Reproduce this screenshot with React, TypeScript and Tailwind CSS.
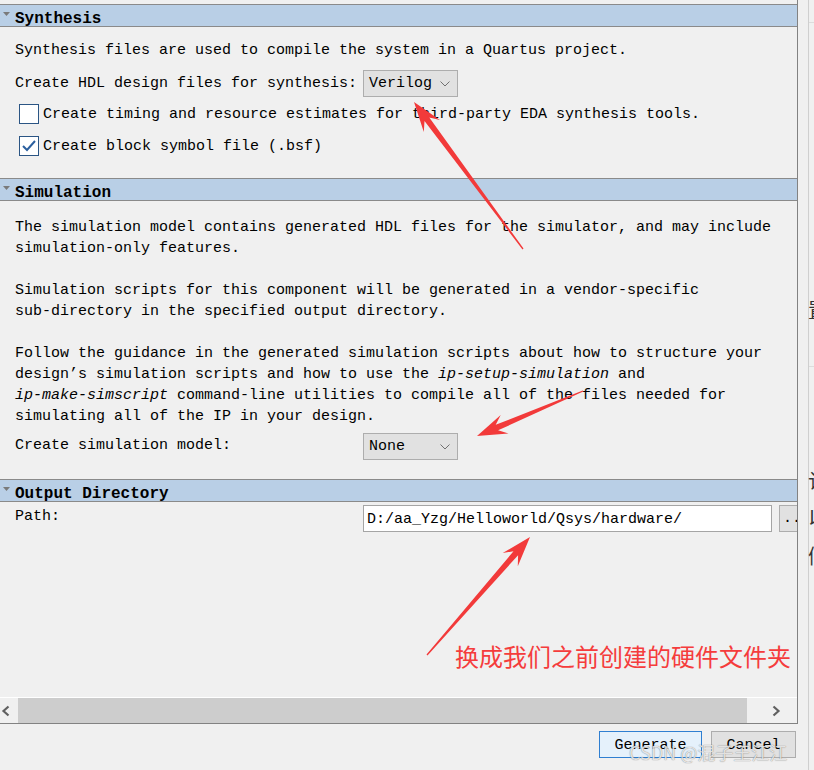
import React from "react";

function Arrow({ x1, y1, x2, y2 }: { x1: number; y1: number; x2: number; y2: number }) {
  const dx = x2 - x1;
  const dy = y2 - y1;
  const len = Math.hypot(dx, dy);
  const ux = dx / len;
  const uy = dy / len;
  const nx = -uy;
  const ny = ux;
  const L = 30;
  const hw = 10;
  const w2 = 3;
  const bx = x2 - ux * L;
  const by = y2 - uy * L;
  const kx = x2 - ux * L * 0.72;
  const ky = y2 - uy * L * 0.72;
  const pts = [
    [x1 + nx * 0.6, y1 + ny * 0.6],
    [kx + nx * w2, ky + ny * w2],
    [bx + nx * hw, by + ny * hw],
    [x2, y2],
    [bx - nx * hw, by - ny * hw],
    [kx - nx * w2, ky - ny * w2],
    [x1 - nx * 0.6, y1 - ny * 0.6],
  ]
    .map((p) => `${p[0].toFixed(1)},${p[1].toFixed(1)}`)
    .join(" ");
  return <polygon points={pts} fill="#f23a3a" />;
}

function Header({ title }: { title: string }) {
  return (
    <div className="relative h-[23px] border-y border-[#8a8a8a] bg-[#b9cfe6] flex items-center">
      <svg className="absolute left-[3px] top-[7px]" width="7" height="5" viewBox="0 0 7 5">
        <polygon points="0,0 7,0 3.5,4" fill="#7a7a7a" />
      </svg>
      <span className="pl-[15px] text-[16px] font-bold text-black leading-none pt-[6px]">{title}</span>
    </div>
  );
}

function Select({ value }: { value: string }) {
  return (
    <div className="relative w-[95px] h-[27px] bg-[#e1e1e1] border border-[#adadad] flex items-center pl-[5px] pt-[2px] text-[15px] text-black shrink-0">
      <span>{value}</span>
      <svg className="absolute right-[7px] top-[10px]" width="10" height="6" viewBox="0 0 10 6">
        <polyline points="0.5,0.5 5,5 9.5,0.5" fill="none" stroke="#707070" strokeWidth="1" />
      </svg>
    </div>
  );
}

function Checkbox({ checked }: { checked: boolean }) {
  return (
    <div className="w-[20px] h-[20px] border border-[#2b5584] bg-white flex items-center justify-center shrink-0">
      {checked && (
        <svg width="16" height="14" viewBox="0 0 16 14">
          <polyline points="2,7 6,11 14,2" fill="none" stroke="#2b5f9e" strokeWidth="2" />
        </svg>
      )}
    </div>
  );
}

export default function App() {
  return (
    <div className="relative w-[814px] h-[770px] bg-[#f0f0f0] overflow-hidden flex font-[Liberation_Mono,Courier_New,monospace] text-[15px] text-black">
      {/* main column */}
      <div className="w-[798px] shrink-0 flex flex-col">
        <div className="relative h-[724px] border-r border-b border-[#828282] flex flex-col overflow-hidden pt-[4px]">
          {/* Synthesis */}
          <Header title="Synthesis" />
          <div className="mt-[11px] h-[22px] leading-[22px] pl-[15px] pt-[2px] whitespace-pre">
            Synthesis files are used to compile the system in a Quartus project.
          </div>
          <div className="mt-[10px] h-[27px] flex items-center pl-[15px]">
            <span className="w-[348px] shrink-0 whitespace-pre leading-[22px]">Create HDL design files for synthesis:</span>
            <Select value="Verilog" />
          </div>
          <div className="mt-[7px] h-[20px] flex items-start pl-[19px] gap-[4px]">
            <Checkbox checked={false} />
            <span className="whitespace-pre leading-[20px] pt-[1px]">Create timing and resource estimates for third-party EDA synthesis tools.</span>
          </div>
          <div className="mt-[12px] h-[20px] flex items-start pl-[19px] gap-[4px]">
            <Checkbox checked={true} />
            <span className="whitespace-pre leading-[20px] pt-[1px]">Create block symbol file (.bsf)</span>
          </div>

          {/* Simulation */}
          <div className="mt-[22px]">
            <Header title="Simulation" />
          </div>
          <div className="mt-[16px] pl-[15px] leading-[21px] whitespace-pre">
            <div>The simulation model contains generated HDL files for the simulator, and may include</div>
            <div>simulation-only features.</div>
          </div>
          <div className="mt-[21px] pl-[15px] leading-[21px] whitespace-pre">
            <div>Simulation scripts for this component will be generated in a vendor-specific</div>
            <div>sub-directory in the specified output directory.</div>
          </div>
          <div className="mt-[21px] pl-[15px] leading-[21px] whitespace-pre">
            <div>Follow the guidance in the generated simulation scripts about how to structure your</div>
            <div>
              design’s simulation scripts and how to use the <i>ip-setup-simulation</i> and
            </div>
            <div>
              <i>ip-make-simscript</i> command-line utilities to compile all of the files needed for
            </div>
            <div>simulating all of the IP in your design.</div>
          </div>
          <div className="mt-[6px] h-[27px] flex items-start pl-[15px]">
            <span className="w-[348px] shrink-0 whitespace-pre leading-[22px] pt-[2px]">Create simulation model:</span>
            <Select value="None" />
          </div>

          {/* Output Directory */}
          <div className="mt-[19px]">
            <Header title="Output Directory" />
          </div>
          <div className="mt-[3px] h-[27px] flex items-start pl-[15px]">
            <span className="w-[348px] shrink-0 whitespace-pre leading-[20px] pt-[2px]">Path:</span>
            <div className="w-[409px] h-[27px] bg-white border border-[#a5a5a5] flex items-center pl-[3px] pt-[3px] shrink-0 whitespace-pre">
              D:/aa_Yzg/Helloworld/Qsys/hardware/
            </div>
            <div className="ml-[7px] w-[24px] h-[27px] bg-[#e1e1e1] border border-[#adadad] flex items-center pl-[3px] shrink-0 leading-none">
              ...
            </div>
          </div>

          {/* horizontal scrollbar */}
          <div className="mt-auto h-[26px] border-t border-white flex">
            <div className="w-[18px] h-full flex items-center justify-start pl-[1px] bg-[#f0f0f0]">
              <svg width="10" height="12" viewBox="0 0 10 12">
                <polyline points="7.5,1.5 2.5,6 7.5,10.5" fill="none" stroke="#606060" strokeWidth="2.2" />
              </svg>
            </div>
            <div className="w-[729px] h-full bg-[#cdcdcd]" />
            <div className="flex-1" />
            <div className="w-[18px] h-full flex items-center justify-center mr-[12px]">
              <svg width="10" height="12" viewBox="0 0 10 12">
                <polyline points="2.5,1.5 7.5,6 2.5,10.5" fill="none" stroke="#606060" strokeWidth="2.2" />
              </svg>
            </div>
          </div>
        </div>

        {/* buttons */}
        <div className="flex-1 flex items-start justify-end pt-[7px] pr-[2px] gap-[9px]">
          <div className="w-[103px] h-[27px] border border-[#2f7fd1] bg-[#e5f1fb] flex items-center justify-center pt-[4px]">
            Generate
          </div>
          <div className="w-[85px] h-[27px] border border-[#adadad] bg-[#e1e1e1] flex items-center justify-center pt-[4px]">
            Cancel
          </div>
        </div>
      </div>

      {/* right strip */}
      <div className="relative flex-1 overflow-hidden font-[Noto_Sans_CJK_SC,sans-serif]">
        <div className="absolute left-[10px] top-0 bottom-0 w-px bg-[#cfcfcf]" />
        <div className="absolute left-[11px] top-[22px] w-[10px] h-px bg-[#dcdcdc]" />
        <div className="absolute left-[11px] top-[366px] w-[10px] h-px bg-[#dcdcdc]" />
        <div className="absolute left-[10px] top-[300px] text-[20px] leading-none text-[#333]">置</div>
        <div className="absolute left-[10px] top-[471px] text-[20px] leading-none text-[#333]">认</div>
        <div className="absolute left-[10px] top-[508px] text-[20px] leading-none text-[#333]">以</div>
        <div className="absolute left-[10px] top-[546px] text-[20px] leading-none text-[#333]">们</div>
      </div>

      {/* annotations */}
      <svg className="absolute left-0 top-0 pointer-events-none" width="814" height="770" viewBox="0 0 814 770">
        <Arrow x1={523} y1={249} x2={414} y2={102} />
        <Arrow x1={583} y1={391} x2={477} y2={436} />
        <Arrow x1={427} y1={655} x2={530} y2={537} />
      </svg>
      <div className="absolute left-[455px] top-[641px] text-[24px] leading-[30px] text-[#f53c3c] font-[Noto_Sans_CJK_SC,sans-serif] whitespace-pre">
        换成我们之前创建的硬件文件夹
      </div>
      <div className="absolute left-[629px] top-[739px] text-[18px] leading-[26px] text-white/80 font-[Noto_Sans_CJK_SC,sans-serif] whitespace-pre [text-shadow:0_0_1px_rgba(0,0,0,0.6)]">
        CSDN @混子王江江
      </div>
    </div>
  );
}
